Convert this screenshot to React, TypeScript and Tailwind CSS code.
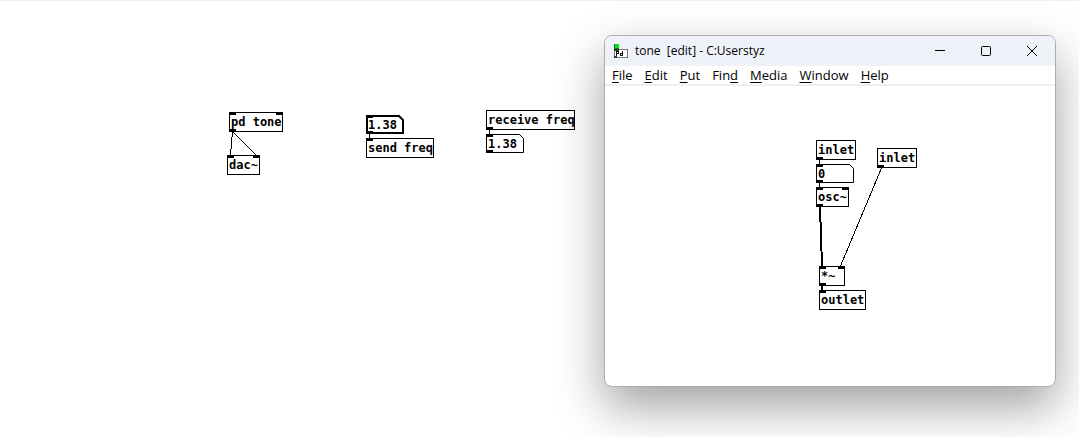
import React, { useState } from "react";

type BoxProps = {
  label: string;
  place: string;
  inlets?: string[];
  outlets?: string[];
};

function ObjectBox({ label, place, inlets = [], outlets = [] }: BoxProps) {
  return (
    <div
      className={`absolute box-border h-5 border border-black bg-white pl-px font-['DejaVu_Sans_Mono',monospace] text-[12px] leading-[18px] font-bold whitespace-nowrap text-black ${place}`}
    >
      {inlets.map((at) => (
        <span key={at} className={`absolute -top-px h-[3px] w-[7px] bg-black ${at}`} />
      ))}
      {label}
      {outlets.map((at) => (
        <span key={at} className={`absolute -bottom-px h-[3px] w-[7px] bg-black ${at}`} />
      ))}
    </div>
  );
}

function NumberBox({ initial, name, place, selected = false }: { initial: string; name: string; place: string; selected?: boolean }) {
  const [value, setValue] = useState(initial);
  return (
    <div className={`absolute h-[19px] w-[38px] ${place}`}>
      <svg className="absolute inset-0" width="38" height="19" viewBox="0 0 38 19" aria-hidden="true">
        {selected ? (
          <path d="M1 1H33L37 5V18H1Z" fill="#fff" stroke="#000" strokeWidth="2" />
        ) : (
          <path d="M.5 .5H33.5L37.5 4.5V18.5H.5Z" fill="#fff" stroke="#000" />
        )}
        <path d="M0 0H7V3H0ZM0 16H7V19H0Z" fill="#000" />
      </svg>
      <input
        aria-label={name}
        value={value}
        onChange={(e) => setValue(e.target.value)}
        className="relative block h-[19px] w-full bg-transparent pt-px pl-0.5 font-['DejaVu_Sans_Mono',monospace] text-[12px] leading-[18px] font-bold text-black outline-none"
      />
    </div>
  );
}

const menus = [
  { before: "", key: "F", after: "ile" },
  { before: "", key: "E", after: "dit" },
  { before: "", key: "P", after: "ut" },
  { before: "Fin", key: "d", after: "" },
  { before: "", key: "M", after: "edia" },
  { before: "", key: "W", after: "indow" },
  { before: "", key: "H", after: "elp" },
];

function PdIcon() {
  return (
    <svg width="14" height="14" viewBox="0 0 14 14" aria-hidden="true" shapeRendering="crispEdges">
      <path d="M.5 5.5H13.5V13.5H.5Z" fill="#fff" stroke="#777" />
      <path d="M0 5H5V7H0ZM0 12H3V14H0Z" fill="#333" />
      <rect x="0" y="0" width="5" height="5" fill="#087a12" />
      <rect x="1" y="0" width="4" height="4" fill="#00e51b" />
      <path d="M2.5 12V7.5H4.5V9.5H2.5M8.5 7V11.5H6.5V9.5H8.5" fill="none" stroke="#111" />
    </svg>
  );
}

function ToneWindow() {
  return (
    <section className="absolute top-[34px] left-[604px] flex h-[352px] w-[452px] flex-col overflow-hidden rounded-lg border border-[#adadad] bg-white shadow-[0_20px_48px_rgba(0,0,0,0.37)]">
      <header className="flex h-[30px] shrink-0 items-center bg-[#eff3f9] pl-[9px]">
        <PdIcon />
        <h1 className="flex-1 pl-[7px] text-[12px] whitespace-pre">tone  [edit] - C:Userstyz</h1>
        <button aria-label="Minimize" className="flex h-full w-[46px] items-center justify-center">
          <svg width="10" height="10" viewBox="0 0 10 10"><path d="M0 4.5H10" stroke="#000" /></svg>
        </button>
        <button aria-label="Maximize" className="flex h-full w-[46px] items-center justify-center">
          <svg width="10" height="10" viewBox="0 0 10 10"><rect x=".5" y=".5" width="9" height="9" rx="1" fill="none" stroke="#000" /></svg>
        </button>
        <button aria-label="Close" className="flex h-full w-[46px] items-center justify-center">
          <svg width="10" height="10" viewBox="0 0 10 10"><path d="M0 0L10 10M10 0L0 10" stroke="#000" /></svg>
        </button>
      </header>
      <nav className="flex h-5 shrink-0 items-center gap-3 border-b-2 border-[#f0f0f0] pl-[7px]">
        {menus.map((m) => (
          <button key={m.before + m.key + m.after} className="text-[13px] leading-[18px]">
            {m.before}
            <span className="underline underline-offset-2">{m.key}</span>
            {m.after}
          </button>
        ))}
      </nav>
      <div className="relative flex-1">
        <ObjectBox label="inlet" place="left-[211px] top-[54px] w-10" outlets={["-left-px"]} />
        <NumberBox initial="0" name="Frequency" place="left-[211px] top-[78px]" />
        <ObjectBox label="osc~" place="left-[211px] top-[101px] w-[33px]" inlets={["-left-px", "-right-px"]} outlets={["-left-px"]} />
        <ObjectBox label="inlet" place="left-[272px] top-[62px] w-10" outlets={["-left-px"]} />
        <ObjectBox label="*~" place="left-[214px] top-[180px] w-[26px]" inlets={["-left-px", "-right-px"]} outlets={["-left-px"]} />
        <ObjectBox label="outlet" place="left-[214px] top-[204px] w-[47px]" inlets={["-left-px"]} />
        <svg className="pointer-events-none absolute inset-0 h-full w-full" aria-hidden="true" shapeRendering="crispEdges">
          <path d="M214.5 74V78M214.5 97V101M276.5 82L235.5 180" stroke="#000" fill="none" />
          <path d="M215 121L217 180M217 200V204" stroke="#000" strokeWidth="2" fill="none" />
        </svg>
      </div>
    </section>
  );
}

export default function App() {
  return (
    <main className="relative min-h-screen overflow-hidden border-t border-[#eee] bg-white font-['Open_Sans','Noto_Sans',sans-serif] text-black">
      <div className="absolute inset-0">
        <ObjectBox label="pd tone" place="left-[229px] top-[111px] w-[54px]" inlets={["-left-px", "-right-px"]} outlets={["-left-px"]} />
        <ObjectBox label="dac~" place="left-[227px] top-[154px] w-[33px]" inlets={["-left-px", "-right-px"]} />
        <NumberBox initial="1.38" name="Send value" place="left-[366px] top-[114px]" selected />
        <ObjectBox label="send freq" place="left-[366px] top-[137px] w-[68px]" inlets={["-left-px"]} />
        <ObjectBox label="receive freq" place="left-[486px] top-[109px] w-[89px]" outlets={["-left-px"]} />
        <NumberBox initial="1.38" name="Received value" place="left-[486px] top-[133px]" />
        <svg className="pointer-events-none absolute inset-0 h-full w-full" aria-hidden="true" shapeRendering="crispEdges">
          <path d="M232.5 130.5L230.5 154.5M232.5 130.5L256.5 154.5M369.5 133V137M489.5 129V133" stroke="#000" fill="none" />
        </svg>
      </div>
      <ToneWindow />
    </main>
  );
}
